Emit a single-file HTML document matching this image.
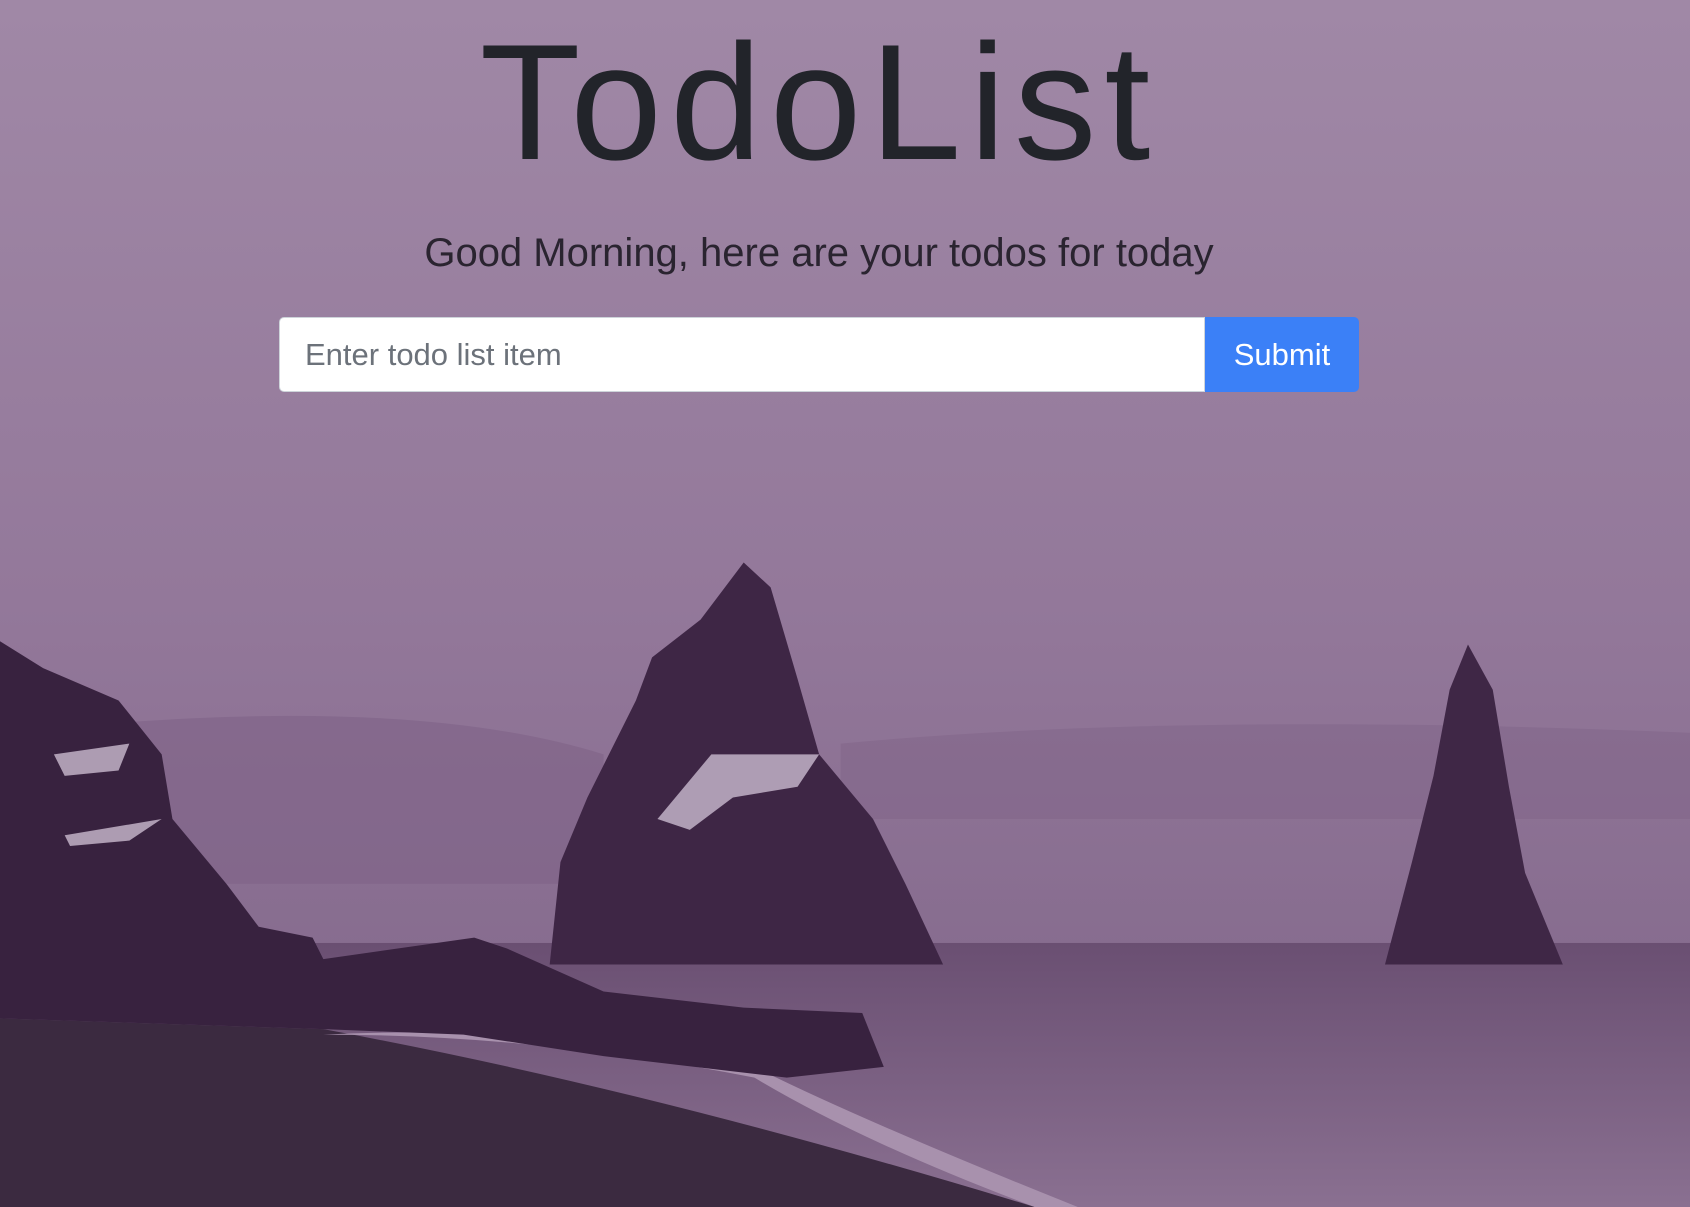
<!DOCTYPE html>
<html><head><meta charset="utf-8"><style>
html,body{margin:0;padding:0;width:1690px;height:1207px;overflow:hidden;font-family:"Liberation Sans",sans-serif;}
#bg{position:absolute;left:0;top:0;width:1690px;height:1207px;}
.c{position:absolute;left:-26px;width:1690px;text-align:center;}
h1{margin:0;font-weight:normal;font-size:165px;line-height:165px;top:20px;color:#22242a;letter-spacing:8px;}
.sub{top:226px;font-size:40px;line-height:54px;color:#2a2430;}
.inp{position:absolute;left:279px;top:317px;width:924px;height:73px;background:#fff;border:1px solid #ced4da;border-radius:5px 0 0 5px;}
.inp span{position:absolute;left:25px;top:19px;font-size:31px;color:#6c727a;}
.btn{position:absolute;left:1205px;top:317px;width:154px;height:75px;background:#3b80f7;border-radius:0 5px 5px 0;color:#fff;font-size:31px;text-align:center;line-height:75px;}
</style></head><body>
<svg id="bg" viewBox="0 0 1568 1120" preserveAspectRatio="none">
<defs>
<linearGradient id="sky" x1="0" y1="0" x2="0" y2="1">
<stop offset="0" stop-color="#a088a6"/><stop offset="0.5" stop-color="#93789a"/><stop offset="1" stop-color="#7e6487"/>
</linearGradient>
<linearGradient id="sea" x1="0" y1="0" x2="0" y2="1">
<stop offset="0" stop-color="#6a4f72"/><stop offset="1" stop-color="#8a7091"/>
</linearGradient>
</defs>
<rect width="1568" height="1120" fill="url(#sky)"/>
<path d="M120 670 Q400 650 560 700 L560 820 L120 820Z" fill="#7f6387" opacity="0.6"/>
<path d="M780 690 Q1100 660 1568 680 L1568 760 L780 760Z" fill="#7f6387" opacity="0.5"/>
<rect y="875" width="1568" height="245" fill="url(#sea)"/>
<path d="M0 945 L300 955 Q600 1010 960 1120 L0 1120Z" fill="#3b2a40"/>
<path d="M300 960 Q500 960 700 1000 Q800 1060 960 1120 L1000 1120 Q800 1040 700 990 Q500 950 300 960Z" fill="#a891ad"/>
<path d="M510 895 L520 800 L545 740 L590 650 L605 610 L650 575 L690 522 L715 545 L740 630 L760 700 L810 760 L840 820 L875 895Z" fill="#3e2645"/>
<path d="M1285 895 L1310 800 L1330 720 L1345 640 L1362 598 L1385 640 L1400 730 L1415 810 L1450 895Z" fill="#3f2746"/>
<path d="M0 595 L40 620 L110 650 L150 700 L160 760 L210 820 L240 860 L290 870 L300 890 L440 870 L470 880 L560 920 L690 935 L800 940 L820 990 L730 1000 L560 980 L430 960 L300 955 L0 945Z" fill="#38223f"/>
<path d="M50 700 L120 690 L110 715 L60 720Z M60 775 L150 760 L120 780 L65 785Z M660 700 L760 700 L740 730 L680 740 L640 770 L610 760Z" fill="#cbbcd0" opacity="0.8"/>
</svg>
<h1 class="c">TodoList</h1>
<div class="c sub">Good Morning, here are your todos for today</div>
<div class="inp"><span>Enter todo list item</span></div>
<div class="btn">Submit</div>
</body></html>
